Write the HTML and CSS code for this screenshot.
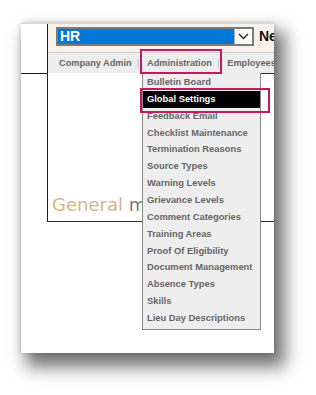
FILE: index.html
```html
<!DOCTYPE html>
<html lang="en">
<head>
  <meta charset="UTF-8" />
  <meta name="viewport" content="width=device-width, initial-scale=1.0"/>
  <title>Administration menu</title>
  <link rel="stylesheet" href="styles.css">
</head>
<body>
  <div class="card">
    <div class="frame">
      <div class="side">
        <div class="side-top"></div>
      </div>

      <div class="main">
        <div class="top">
          <div class="select">
            <span class="value">HR</span>
            <span class="arrow">
              <svg width="11" height="7" viewBox="0 0 11 7"><path d="M1 1 L5.5 5.5 L10 1" fill="none" stroke="#222" stroke-width="1.4"/></svg>
            </span>
          </div>
          <span class="ne">Ne</span>
        </div>

        <div class="nav">
          <span>Company Admin</span><span class="sep">|</span><span>Administration</span><span class="sep">|</span><span>Employees</span>
        </div>

        <div class="body">
          <div class="content">
            <div class="heading"><span class="tan">General</span> m</div>
          </div>
          <div class="panel"></div>
        </div>
      </div>
    </div>

    <!-- Administration dropdown -->
    <ul class="menu">
      <li>Bulletin Board</li>
      <li class="active">Global Settings</li>
      <li>Feedback Email</li>
      <li>Checklist Maintenance</li>
      <li>Termination Reasons</li>
      <li>Source Types</li>
      <li>Warning Levels</li>
      <li>Grievance Levels</li>
      <li>Comment Categories</li>
      <li>Training Areas</li>
      <li>Proof Of Eligibility</li>
      <li>Document Management</li>
      <li>Absence Types</li>
      <li>Skills</li>
      <li>Lieu Day Descriptions</li>
    </ul>

    <!-- callout boxes -->
    <div class="mark mark-admin"></div>
    <div class="mark mark-global"></div>
  </div>
</body>
</html>
```

FILE: styles.css
```css
html, body { height: 100%; }
body {
  margin: 0;
  padding-top: 23px;
  box-sizing: border-box;
  background: #fff;
  font-family: "Liberation Sans", Arial, sans-serif;
}
.card {
  position: relative;
  width: 253px;
  height: 330px;
  margin-left: 21px;
  background: #fff;
  overflow: hidden;
  border-top: 1px solid #d8d8d8;
  box-sizing: border-box;
  box-shadow: 8px 11px 16px 3px rgba(0,0,0,0.55), 0 0 5px rgba(0,0,0,0.18);
}
.frame {
  display: flex;
  height: 198px;
}
.side { flex: none; width: 26px; }
.side-top {
  height: 49px;
  border-bottom: 1px solid #222;
}
.main {
  flex: 1;
  min-width: 0;
  display: flex;
  flex-direction: column;
  border-left: 1px solid #222;
  border-bottom: 1px solid #333;
  box-sizing: border-box;
  height: 198px;
}
/* header with company select */
.top {
  height: 28px;
  box-sizing: border-box;
  padding: 3px 0 0 8px;
  background: #f8f1eb;
  display: flex;
  align-items: flex-start;
  white-space: nowrap;
}
.select {
  flex: none;
  display: flex;
  width: 198px;
  height: 19px;
  box-sizing: border-box;
  border: 2px solid #7a7a7a;
  background: #fff;
}
.select .value {
  flex: 1;
  background: #0078d7;
  color: #fff;
  font-weight: bold;
  font-size: 14px;
  line-height: 15px;
  padding-left: 2px;
}
.select .arrow {
  width: 17px;
  display: flex;
  align-items: center;
  justify-content: center;
  border-left: 1px solid #aaa;
}
.ne {
  margin-left: 5px;
  font-weight: bold;
  font-size: 14px;
  line-height: 19px;
  color: #111;
}
/* nav tabs */
.nav {
  height: 21px;
  box-sizing: border-box;
  border-top: 1px solid #cfcfcf;
  background: #ededed;
  padding-left: 11px;
  font-size: 9.2px;
  font-weight: bold;
  line-height: 20px;
  color: #666;
  white-space: nowrap;
  overflow: hidden;
}
.nav .sep {
  color: #b5b5b5;
  font-weight: normal;
  margin: 0 8px 0 5px;
}
/* page body */
.body {
  flex: 1;
  display: flex;
}
.content {
  flex: 1;
  overflow: hidden;
  display: flex;
  align-items: flex-end;
  padding: 0 0 6px 4px;
}
.heading {
  font-family: "DejaVu Sans", sans-serif;
  font-size: 18px;
  line-height: 21px;
  color: #7a7a7a;
  white-space: nowrap;
}
.heading .tan { color: #d5b58b; }
.panel {
  flex: none;
  width: 13px;
  border-left: 1px solid #333;
  border-top: 1px solid #333;
}
/* dropdown */
.menu {
  position: absolute;
  left: 121px;
  top: 49px;
  width: 119px;
  box-sizing: border-box;
  margin: 0;
  padding: 1px 0 2px;
  list-style: none;
  background: #eeeeee;
  border: 1px solid #8a8a8a;
  border-top: none;
}
.menu li {
  padding-left: 4px;
  font-size: 9.35px;
  font-weight: bold;
  line-height: 16.86px;
  color: #666;
  white-space: nowrap;
}
.menu li.active {
  background: #000;
  color: #fff;
}
.mark {
  position: absolute;
  box-sizing: border-box;
  border: 2.5px solid #c8175d;
}
.mark-admin { left: 119px; top: 25px; width: 82px; height: 25px; }
.mark-global { left: 119px; top: 64px; width: 130px; height: 25px; }
```
